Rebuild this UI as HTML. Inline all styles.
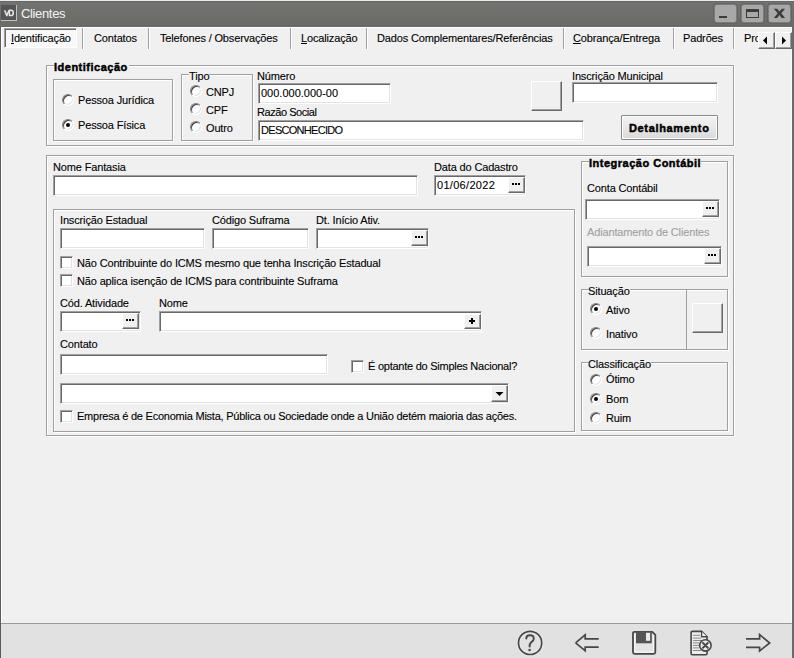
<!DOCTYPE html>
<html><head><meta charset="utf-8">
<style>
*{margin:0;padding:0;box-sizing:border-box}
html,body{width:794px;height:658px;overflow:hidden;background:#f0f0f0}
body{position:relative;font-family:"Liberation Sans",sans-serif;font-size:11px;color:#000}
.a{position:absolute}
.t{position:absolute;font-size:11px;line-height:13px;white-space:nowrap;letter-spacing:-0.15px;color:#000;-webkit-text-stroke:0.1px currentColor}
.b{position:absolute;font-size:11px;line-height:13px;font-weight:bold;white-space:nowrap;color:#000;letter-spacing:0.5px;-webkit-text-stroke:0.45px #000}
/* etched group box */
.g{position:absolute;border:1px solid #a0a0a0;box-shadow:inset 1px 1px 0 #fff,1px 1px 0 #fff}
/* sunken edit */
.e{position:absolute;background:#fff;border:1px solid;border-color:#a0a0a0 #fff #fff #a0a0a0;box-shadow:inset 1px 1px 0 #696969,inset -1px -1px 0 #e3e3e3}
/* raised small button */
.btn{position:absolute;background:#f0f0f0;border:1px solid;border-color:#fff #696969 #696969 #fff;box-shadow:inset -1px -1px 0 #a0a0a0,inset 1px 1px 0 #f0f0f0}
.rad{position:absolute;width:12px;height:12px;border-radius:50%;background:#fff;border:1px solid;border-color:#808080 #fff #fff #808080;box-shadow:inset 1px 1px 0 #404040, inset -1px -1px 0 #e3e3e3}
.rad.on::after{content:"";position:absolute;left:3px;top:3px;width:4px;height:4px;border-radius:50%;background:#000}
.chk{position:absolute;width:13px;height:13px;background:#fff;border:1px solid;border-color:#a0a0a0 #fff #fff #a0a0a0;box-shadow:inset 1px 1px 0 #696969,inset -1px -1px 0 #e3e3e3}
u{text-underline-offset:1px}
.sep{position:absolute;width:2px;top:28px;height:21px;border-left:1px solid #a0a0a0;border-right:1px solid #fff}
.dots{position:absolute;left:3px;top:5px;width:2px;height:2px;background:#000;box-shadow:3px 0 0 #000,6px 0 0 #000}
</style></head><body>
<!-- title bar -->
<div class="a" style="left:0;top:0;width:794px;height:27px;background:linear-gradient(#737371,#6a6a66);border-top:1px solid #ebebeb"></div>
<div class="a" style="left:0;top:1px;width:794px;height:1px;background:#676767"></div>
<div class="a" style="left:1px;top:5px;width:16px;height:16px;background:#555;border-right:1px solid #c0c0c0;border-bottom:1px solid #c0c0c0"></div>
<svg class="a" style="left:0;top:0" width="18" height="22"><g fill="none" stroke="#e6e6e6" stroke-width="1.5" stroke-linejoin="round"><path d="M4.6,10.3 L6.8,15.6 L9,10.3"/><path d="M9.4,10.3 H11 Q13.3,10.3 13.3,13 Q13.3,15.6 11,15.6 H9.4 Z"/></g></svg>
<div class="a" style="left:21px;top:6px;font-size:13px;line-height:15px;color:#f4f4f4;letter-spacing:-0.35px">Clientes</div>
<!-- window buttons -->
<div class="a" style="left:714px;top:4px;width:23px;height:19px;background:#a8a8a8;border:1px solid #7c7c7a;border-radius:3px;box-shadow:0 0 0 1px #636361"></div>
<div class="a" style="left:719px;top:16px;width:8px;height:2px;background:#3c3c3c"></div>
<div class="a" style="left:741px;top:4px;width:23px;height:19px;background:#a8a8a8;border:1px solid #7c7c7a;border-radius:3px;box-shadow:0 0 0 1px #636361"></div>
<div class="a" style="left:746px;top:9px;width:13px;height:9px;border:1px solid #3c3c3c;border-top-width:3px"></div>
<div class="a" style="left:768px;top:4px;width:23px;height:19px;background:#a8a8a8;border:1px solid #7c7c7a;border-radius:3px;box-shadow:0 0 0 1px #636361"></div>
<svg class="a" style="left:768px;top:4px" width="23" height="19"><polygon points="5.8,4.8 9.3,4.8 11.5,7.6 13.7,4.8 17.1,4.8 13.3,9.3 17.1,13.9 13.7,13.9 11.5,11.1 9.3,13.9 5.8,13.9 9.7,9.3" fill="#3c3c3c"/></svg>
<!-- window borders -->
<div class="a" style="left:0;top:27px;width:1px;height:631px;background:#5c5c5c"></div>
<div class="a" style="left:1px;top:27px;width:1px;height:596px;background:#fff"></div>
<div class="a" style="left:1px;top:27px;width:791px;height:1px;background:#fff"></div>
<div class="a" style="left:792px;top:27px;width:2px;height:631px;background:#6b6b6b"></div>
<div class="a" style="left:791px;top:27px;width:1px;height:596px;background:#fafafa"></div>
<!-- bottom bar -->
<div class="a" style="left:1px;top:623px;width:791px;height:1px;background:#9a9a9a"></div>
<div class="a" style="left:1px;top:624px;width:791px;height:34px;background:#e1e1e1"></div>

<!-- tabs -->
<div class="a" style="left:4px;top:28px;width:73px;height:20px;background:#f8f8f8;border:1px solid;border-color:#a0a0a0 #fff #fff #a0a0a0;box-shadow:inset 1px 1px 0 #696969"></div>
<div class="t" style="left:11px;top:32px"><u>I</u>dentificação</div>
<div class="sep" style="left:82px"></div>
<div class="t" style="left:94px;top:32px">Contatos</div>
<div class="sep" style="left:148px"></div>
<div class="t" style="left:160px;top:32px">Telefones / Observações</div>
<div class="sep" style="left:290px"></div>
<div class="t" style="left:301px;top:32px"><u>L</u>ocalização</div>
<div class="sep" style="left:366px"></div>
<div class="t" style="left:377px;top:32px">Dados Complementares/Referências</div>
<div class="sep" style="left:563px"></div>
<div class="t" style="left:573px;top:32px"><u>C</u>obrança/Entrega</div>
<div class="sep" style="left:673px"></div>
<div class="t" style="left:683px;top:32px">Padrões</div>
<div class="sep" style="left:733px"></div>
<div class="t" style="left:744px;top:32px">Pro</div>
<div class="btn" style="left:758px;top:32px;width:17px;height:17px"></div>
<svg class="a" style="left:758px;top:32px" width="17" height="17"><path d="M9,4.5 V12.5 L5,8.5 Z" fill="#000"/></svg>
<div class="btn" style="left:775px;top:32px;width:17px;height:17px"></div>
<svg class="a" style="left:775px;top:32px" width="17" height="17"><path d="M7,4.5 V12.5 L11,8.5 Z" fill="#000"/></svg>

<!-- Group 1: Identificação -->
<div class="g" style="left:46px;top:65px;width:688px;height:81px"></div>
<div class="b" style="left:54px;top:61px;background:#f0f0f0;padding-right:1px">Identificação</div>
<div class="g" style="left:53px;top:79px;width:120px;height:62px"></div>
<div class="rad" style="left:62px;top:94px"></div>
<div class="t" style="left:78px;top:94px">Pessoa Jurídica</div>
<div class="rad on" style="left:62px;top:119px"></div>
<div class="t" style="left:78px;top:119px">Pessoa Física</div>

<div class="g" style="left:181px;top:74px;width:72px;height:67px"></div>
<div class="t" style="left:189px;top:70px;background:#f0f0f0">Tipo</div>
<div class="rad" style="left:190px;top:85px"></div>
<div class="t" style="left:206px;top:86px">CNPJ</div>
<div class="rad" style="left:190px;top:103px"></div>
<div class="t" style="left:206px;top:104px">CPF</div>
<div class="rad" style="left:190px;top:121px"></div>
<div class="t" style="left:206px;top:122px">Outro</div>

<div class="t" style="left:257px;top:70px">Número</div>
<div class="e" style="left:258px;top:83px;width:133px;height:21px"></div>
<div class="t" style="left:261px;top:87px;letter-spacing:0px">000.000.000-00</div>
<div class="t" style="left:257px;top:106px;letter-spacing:-0.45px">Razão Social</div>
<div class="e" style="left:258px;top:120px;width:326px;height:21px"></div>
<div class="t" style="left:261px;top:124px;letter-spacing:-0.7px">DESCONHECIDO</div>

<div class="btn" style="left:531px;top:81px;width:31px;height:30px"></div>
<div class="t" style="left:572px;top:70px">Inscrição Municipal</div>
<div class="e" style="left:572px;top:82px;width:146px;height:21px"></div>
<div class="a" style="left:621px;top:115px;width:97px;height:25px;border:1px solid #8a8a8a;border-radius:1px;background:#f8f8f8"><div class="a" style="left:0;top:0;right:0;bottom:0;border:1px solid #fcfcfc;border-radius:3px;background:linear-gradient(#f2f2f2,#e6e6e6 60%,#dadada)"></div></div>
<div class="b" style="left:629px;top:122px;letter-spacing:0.65px">Detalhamento</div>

<!-- Group 2 main -->
<div class="g" style="left:46px;top:155px;width:688px;height:281px"></div>
<div class="t" style="left:53px;top:161px">Nome Fantasia</div>
<div class="e" style="left:53px;top:175px;width:365px;height:21px"></div>
<div class="t" style="left:434px;top:161px">Data do Cadastro</div>
<div class="e" style="left:434px;top:175px;width:92px;height:21px"></div>
<div class="t" style="left:437px;top:179px;letter-spacing:0.3px">01/06/2022</div>
<div class="btn" style="left:508px;top:177px;width:17px;height:16px"><div class="dots"></div></div>

<div class="g" style="left:53px;top:209px;width:522px;height:223px"></div>
<div class="t" style="left:60px;top:214px">Inscrição Estadual</div>
<div class="e" style="left:60px;top:228px;width:145px;height:21px"></div>
<div class="t" style="left:212px;top:214px">Código Suframa</div>
<div class="e" style="left:212px;top:228px;width:97px;height:21px"></div>
<div class="t" style="left:316px;top:214px">Dt. Início Ativ.</div>
<div class="e" style="left:316px;top:228px;width:113px;height:21px"></div>
<div class="btn" style="left:411px;top:230px;width:17px;height:16px"><div class="dots"></div></div>

<div class="chk" style="left:60px;top:256px"></div>
<div class="t" style="left:77px;top:257px">Não Contribuinte do ICMS mesmo que tenha Inscrição Estadual</div>
<div class="chk" style="left:60px;top:274px"></div>
<div class="t" style="left:77px;top:275px">Não aplica isenção de ICMS para contribuinte Suframa</div>

<div class="t" style="left:60px;top:297px">Cód. Atividade</div>
<div class="e" style="left:60px;top:311px;width:81px;height:21px"></div>
<div class="btn" style="left:122px;top:313px;width:17px;height:16px"><div class="dots"></div></div>
<div class="t" style="left:159px;top:297px">Nome</div>
<div class="e" style="left:159px;top:311px;width:323px;height:21px"></div>
<div class="btn" style="left:464px;top:314px;width:17px;height:15px"></div>
<div class="a" style="left:469px;top:320px;width:6px;height:2px;background:#000"></div>
<div class="a" style="left:471px;top:318px;width:2px;height:6px;background:#000"></div>

<div class="t" style="left:60px;top:338px">Contato</div>
<div class="e" style="left:60px;top:354px;width:268px;height:21px"></div>
<div class="chk" style="left:351px;top:360px"></div>
<div class="t" style="left:368px;top:360px;letter-spacing:-0.25px">É optante do Simples Nacional?</div>
<div class="e" style="left:60px;top:383px;width:449px;height:21px"></div>
<div class="btn" style="left:491px;top:385px;width:17px;height:17px"></div>
<svg class="a" style="left:491px;top:385px" width="17" height="17"><path d="M4.5,7 L12.5,7 L8.5,11 Z" fill="#000"/></svg>
<div class="chk" style="left:60px;top:410px"></div>
<div class="t" style="left:77px;top:410px;letter-spacing:-0.23px">Empresa é de Economia Mista, Pública ou Sociedade onde a União detém maioria das ações.</div>

<!-- Integração Contábil -->
<div class="g" style="left:581px;top:161px;width:147px;height:116px"></div>
<div class="b" style="left:589px;top:157px;background:#f0f0f0">Integração Contábil</div>
<div class="t" style="left:587px;top:182px">Conta Contábil</div>
<div class="e" style="left:585px;top:199px;width:135px;height:21px"></div>
<div class="btn" style="left:702px;top:201px;width:17px;height:16px"><div class="dots"></div></div>
<div class="t" style="left:587px;top:226px;color:#a0a0a0">Adiantamento de Clientes</div>
<div class="e" style="left:587px;top:246px;width:135px;height:21px"></div>
<div class="btn" style="left:704px;top:248px;width:17px;height:16px"><div class="dots"></div></div>

<!-- Situação -->
<div class="g" style="left:581px;top:289px;width:147px;height:61px"></div>
<div class="a" style="left:686px;top:290px;width:1px;height:59px;background:#a0a0a0"></div>
<div class="t" style="left:588px;top:285px;background:#f0f0f0">Situação</div>
<div class="rad on" style="left:590px;top:303px"></div>
<div class="t" style="left:606px;top:304px">Ativo</div>
<div class="rad" style="left:590px;top:327px"></div>
<div class="t" style="left:606px;top:328px">Inativo</div>
<div class="btn" style="left:692px;top:303px;width:31px;height:30px"></div>

<!-- Classificação -->
<div class="g" style="left:581px;top:362px;width:147px;height:69px"></div>
<div class="t" style="left:588px;top:358px;background:#f0f0f0">Classificação</div>
<div class="rad" style="left:590px;top:374px"></div>
<div class="t" style="left:606px;top:373px">Ótimo</div>
<div class="rad on" style="left:590px;top:393px"></div>
<div class="t" style="left:606px;top:393px">Bom</div>
<div class="rad" style="left:590px;top:412px"></div>
<div class="t" style="left:606px;top:412px">Ruim</div>

<!-- bottom icons -->
<svg class="a" style="left:500px;top:624px" width="294" height="34">
 <g fill="none" stroke="#474747" stroke-width="1.7" stroke-linecap="round" stroke-linejoin="round">
  <circle cx="30.1" cy="18.9" r="11.6" stroke="#ffffff" stroke-opacity="0.35" stroke-width="3.5"/>
  <circle cx="30.1" cy="18.9" r="11.6"/>
  <path d="M26.3,14.6 C26.3,12.3 27.9,11.2 30,11.2 C32.2,11.2 33.8,12.5 33.8,14.5 C33.8,16.4 32.4,17.3 31.2,18.3 C30,19.3 29.6,20.3 29.6,22.6" stroke-width="1.9"/>
  <circle cx="29.6" cy="26" r="1.3" fill="#474747" stroke="none"/>
  <path d="M75.6,18.8 L85.2,10.8 V14.9 H98.7 M75.6,18.8 L85.2,26.8 V23.2 H98.7" stroke-linecap="butt" stroke-linejoin="miter"/>
  <path d="M133,9.3 Q133,7.8 134.5,7.8 H152.3 L155.3,10.8 V28.3 Q155.3,29.8 153.8,29.8 H134.5 Q133,29.8 133,28.3 Z" fill="#e4e4e4" stroke-width="1.8"/>
  <path d="M134.7,10 V28.1 H153.6 V11.6" stroke="#fafafa" stroke-width="1" fill="none"/>
  <rect x="136" y="7.5" width="15.8" height="11.8" fill="#555" stroke="none"/>
  <rect x="146" y="8.8" width="4.1" height="8" fill="#eaeaea" stroke="none"/>
  <path d="M191.1,8.6 Q191.1,7.4 192.3,7.4 H201.6 L207,12.8 V29.6 Q207,30.8 205.8,30.8 H192.3 Q191.1,30.8 191.1,29.6 Z" fill="#ededed" stroke-width="1.6"/>
  <path d="M201.6,7.4 V12.8 H207" fill="#fafafa" stroke-width="1.4"/>
  <g stroke="#8a8a8a" stroke-width="1" stroke-linecap="butt">
   <path d="M193,11.3 H200 M193,14.1 H201 M193,16.5 H204 M193,18.9 H199 M193,21.4 H199 M193,23.9 H199 M193,26.5 H201"/>
  </g>
  <circle cx="205.4" cy="21.4" r="5.7" fill="#ececec" stroke-width="1.6"/>
  <path d="M203,19 L207.8,23.8 M207.8,19 L203,23.8" stroke-width="2"/>
  <path d="M246,14.8 H259.6 V10.6 L269.7,19 L259.6,26.9 V23.3 H246" stroke-linecap="butt" stroke-linejoin="miter"/>
 </g>
</svg>
</body></html>
